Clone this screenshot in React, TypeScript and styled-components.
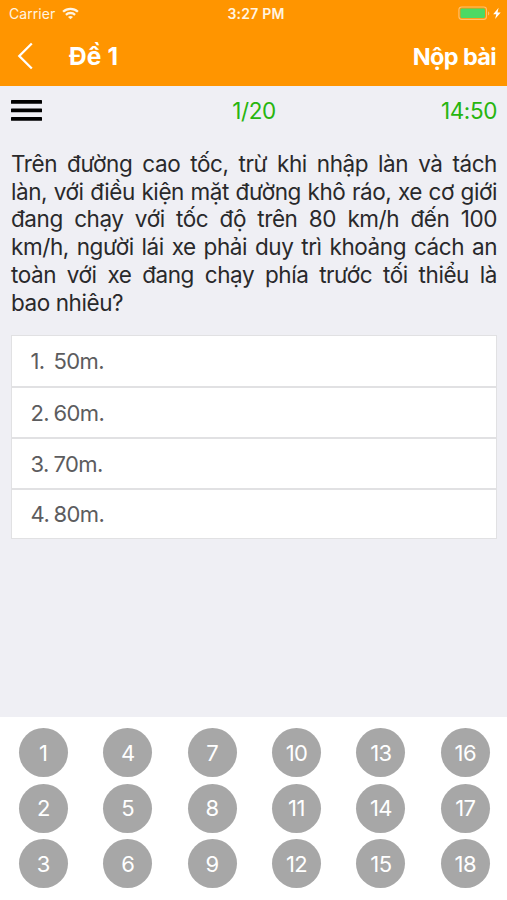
import React from "react";
import styled, { createGlobalStyle } from "styled-components";

const GlobalStyle = createGlobalStyle`
  *, *::before, *::after { box-sizing: border-box; }
  body {
    margin: 0;
    background: #efeff4;
    font-family: Inter, "Noto Sans", sans-serif;
    -webkit-font-smoothing: antialiased;
  }
  button { border: 0; margin: 0; padding: 0; background: none; font: inherit; color: inherit; }
`;

const Screen = styled.main`
  display: flex;
  flex-direction: column;
  width: 507px;
  height: 900px;
  overflow: hidden;
  background: #efeff4;
`;

const Header = styled.header`
  height: 86px;
  flex: none;
  background: #ff9500;
  color: #fff;
`;

const StatusBar = styled.div`
  display: grid;
  grid-template-columns: 1fr auto 1fr;
  align-items: center;
  height: 27px;
  padding: 0 5px 0 9px;
  color: #fff4e2;
`;

const Carrier = styled.div`
  display: flex;
  align-items: center;
  gap: 7px;
  font-size: 14px;
  letter-spacing: 0.05px;
`;

const Clock = styled.div`
  font-size: 14px;
  font-weight: 600;
  letter-spacing: 0.2px;
  padding-left: 1px;
`;

const Power = styled.div`
  display: flex;
  justify-content: flex-end;
`;

const NavBar = styled.nav`
  display: flex;
  align-items: center;
  height: 58px;
  padding: 0 11px 0 17px;
  font-size: 23.5px;
  font-weight: 700;
`;

const BackButton = styled.button`
  display: flex;
  width: 52px;
`;

const Title = styled.h1`
  flex: 1;
  margin: 0;
  font-size: 24.5px;
  letter-spacing: 0;
  word-spacing: 0.5px;
`;

const Submit = styled.button`
  letter-spacing: -0.65px;
  font-weight: 650;
`;

const InfoRow = styled.div`
  display: grid;
  grid-template-columns: 1fr auto 1fr;
  align-items: center;
  height: 49px;
  padding: 0 10px 0 11px;
  color: #27b50e;
  font-size: 22.5px;
  letter-spacing: -0.4px;
`;

const MenuButton = styled.button`
  display: flex;
  width: 31px;
`;

const Timer = styled.span`
  text-align: right;
`;

const Question = styled.p`
  margin: 15px 10px 0 11px;
  color: #29292b;
  font-size: 22.5px;
  line-height: 27.7px;
  letter-spacing: -0.43px;
  word-spacing: 0px;
  text-align: justify;
`;

const Answers = styled.ol`
  list-style: none;
  margin: 19px 10px 0 11px;
  padding: 0;
  border: 1px solid #e1e1e3;
  background: #fff;
`;

const Answer = styled.li`
  display: flex;
  align-items: center;
  height: 51px;
  padding-left: 18.5px;
  color: #5c5c5e;
  font-size: 22px;
  letter-spacing: -0.6px;
  & + & { border-top: 2px solid #e1e1e3; }
  &:first-child, &:last-child { height: 50px; }
`;

const AnswerIndex = styled.span`
  width: 23px;
`;

const Pager = styled.section`
  display: grid;
  grid-template-columns: repeat(6, 49px);
  grid-template-rows: repeat(3, 49px);
  grid-auto-flow: column;
  column-gap: 35.4px;
  row-gap: 6.5px;
  height: 183px;
  margin-top: auto;
  padding: 11px 0 0 18.8px;
  background: #fff;
`;

const PageDot = styled.button`
  border-radius: 50%;
  background: #a7a7a7;
  color: #fff;
  font-size: 22px;
  letter-spacing: -0.6px;
  text-align: center;
`;

const WifiIcon = () => (
  <svg width="17" height="13" viewBox="0 0 17 13" fill="none" stroke="currentColor" strokeWidth="2.3">
    <path d="M1.1 4.8C5.2.8 11.8.8 15.9 4.8" />
    <path d="M3.9 7.8c2.6-2.4 6.6-2.4 9.2 0" />
    <path d="M8.5 12.3 6 9.9c1.4-1.2 3.6-1.2 5 0Z" fill="currentColor" stroke="none" />
  </svg>
);

const BatteryIcon = () => (
  <svg width="44" height="15" viewBox="0 0 44 15">
    <rect x="0.9" y="1" width="27.6" height="12.4" rx="2.8" fill="none" stroke="#ffc16d" strokeWidth="1.1" />
    <rect x="2.4" y="2.4" width="24.6" height="9.6" rx="1.4" fill="#4cd964" />
    <path d="M30 5.3c1.8.8 1.8 3.5 0 4.3Z" fill="#ffc16d" />
    <path d="m40.6 1.8-5.4 6.4h3.1l-1.2 4.9 5.6-6.5h-3.2Z" fill="#fff" />
  </svg>
);

const ChevronIcon = () => (
  <svg width="18" height="28" viewBox="0 0 18 28" fill="none" stroke="currentColor" strokeWidth="2.3">
    <path d="M14.8 1.5 2.3 14l12.5 12.5" />
  </svg>
);

const MenuIcon = () => (
  <svg width="31" height="21" viewBox="0 0 31 21" fill="#000">
    <rect y="0" width="31" height="3.8" rx="0.6" />
    <rect y="8.5" width="31" height="3.8" rx="0.6" />
    <rect y="17" width="31" height="3.8" rx="0.6" />
  </svg>
);

const answers = ["50m.", "60m.", "70m.", "80m."];
const pages = Array.from({ length: 18 }, (_, i) => i + 1);

export default function App() {
  return (
    <Screen>
      <GlobalStyle />
      <Header>
        <StatusBar>
          <Carrier>Carrier <WifiIcon /></Carrier>
          <Clock>3:27 PM</Clock>
          <Power><BatteryIcon /></Power>
        </StatusBar>
        <NavBar>
          <BackButton aria-label="Quay lại"><ChevronIcon /></BackButton>
          <Title>Đề 1</Title>
          <Submit>Nộp bài</Submit>
        </NavBar>
      </Header>
      <InfoRow>
        <MenuButton aria-label="Menu"><MenuIcon /></MenuButton>
        <span>1/20</span>
        <Timer>14:50</Timer>
      </InfoRow>
      <Question>
        Trên đường cao tốc, trừ khi nhập làn và tách làn, với điều kiện mặt đường khô ráo, xe cơ giới
        đang chạy với tốc độ trên 80 km/h đến 100 km/h, người lái xe phải duy trì khoảng cách an toàn
        với xe đang chạy phía trước tối thiểu là bao&nbsp;nhiêu?
      </Question>
      <Answers>
        {answers.map((text, i) => (
          <Answer key={text}>
            <AnswerIndex>{i + 1}.</AnswerIndex>
            <span>{text}</span>
          </Answer>
        ))}
      </Answers>
      <Pager>
        {pages.map((n) => <PageDot key={n}>{n}</PageDot>)}
      </Pager>
    </Screen>
  );
}
